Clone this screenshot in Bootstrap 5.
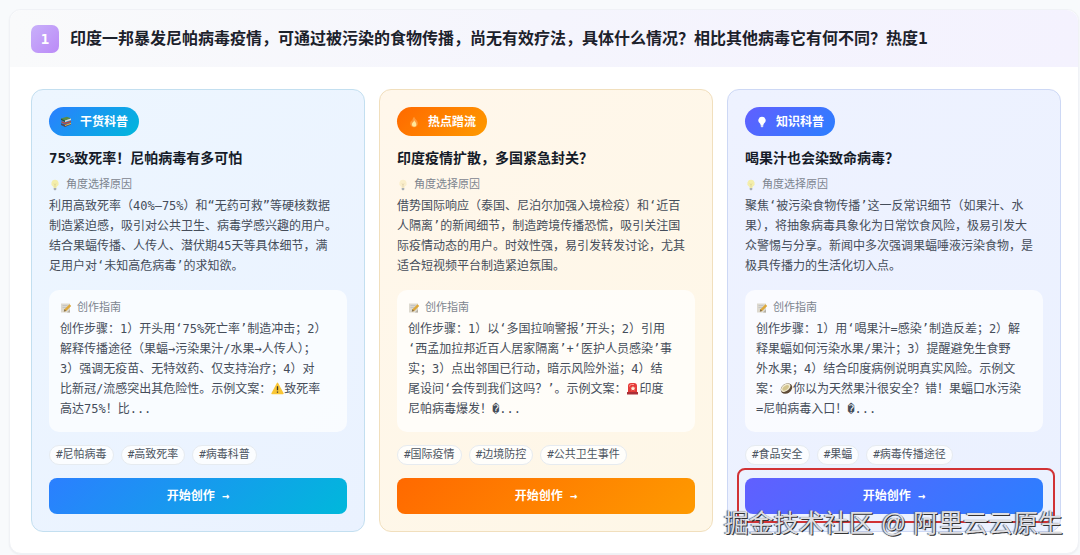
<!DOCTYPE html>
<html lang="zh-CN">
<head>
<meta charset="utf-8">
<meta name="viewport" content="width=device-width, initial-scale=1">
<title>热点选题</title>
<link href="https://cdn.jsdelivr.net/npm/bootstrap@5.3.0/dist/css/bootstrap.min.css" rel="stylesheet">
<style>
body{background:#f8fafc;font-family:"DejaVu Sans Mono","Noto Sans CJK SC",monospace;font-size:12px;line-height:20px;color:#454d5a}
.topic{margin:9px 1px 2px 9px;border:1px solid #f0f2f6;border-radius:12px;background:#fff;box-shadow:0 1px 2px #0f172a0d}
.topic-head{padding:15px 21px 14px;gap:11px;background:linear-gradient(90deg,#f9fafb,#f5f5fd 50%,#f4f2fe);border-radius:12px 12px 0 0}
.rank{width:28px;height:28px;border-radius:7px;background:linear-gradient(135deg,#c8b0fa,#bb8af7);color:#fff;font-size:14px}
.topic-head h1{font-size:16px;line-height:24px;color:#1c212b}
.topic-body{padding:22px 17px 21px 21px}
.angles{--bs-gutter-x:14px;--bs-gutter-y:14px}
.angle{padding:17px;border:1px solid;border-radius:12px}
.blue{background:linear-gradient(135deg,#edf6ff,#eaf2ff);border-color:#c3dff0;--fill:linear-gradient(135deg,#2b7fff,#00b8db)}
.orange{background:linear-gradient(135deg,#fff7eb,#fef7e7);border-color:#f1dfbd;--fill:linear-gradient(135deg,#ff6900,#fe9a00)}
.indigo{background:linear-gradient(135deg,#eef2ff,#ebf1ff);border-color:#cdd8f5;--fill:linear-gradient(135deg,#615fff,#2b7fff)}
.kind{height:29px;padding:0 11px;gap:8px;border-radius:15px;background:var(--fill);color:#fff;font-weight:700}
.angle h2{font-size:14px;line-height:20px;margin:12px 0 9px;color:#151b28}
.hint{font-size:11px;line-height:16px;gap:5px;color:#7d858f;margin-bottom:3px}
.guide{margin-top:14px;padding:10px 11px 13px;border-radius:10px;background:#ffffffb3}
.tags{gap:7px;margin:13px 0}
.tag-pill{font-size:11px;line-height:18px;padding:0 6px;border:1px solid #e6ebf0;border-radius:10px;background:#ffffffcc;color:#4d5561}
.start{height:36px;padding:0;border:0;border-radius:8px;background:var(--fill);color:#fff;font-size:12px;font-weight:700;width:100%}
.start:hover{color:#fff;filter:brightness(.95)}
.emo{width:12px;height:12px;flex:none}
.emo-text{width:13px;height:13px;vertical-align:-2px}
.focus-frame{position:absolute;inset:-10px -12px -9px -8px;border:2px solid #d13235;border-radius:8px;pointer-events:none}
.stamp{position:absolute;right:-3px;bottom:-10px;font:25px/36px "Liberation Sans","Noto Sans CJK SC",sans-serif;color:#dedee2;text-shadow:1px 1px 0 #333,-1px 0 1px #555;white-space:nowrap;pointer-events:none}
</style>
</head>
<body>
<svg class="d-none" aria-hidden="true">
  <symbol id="bulb" viewBox="0 0 12 12"><path d="M6 .8a3.6 3.6 0 0 0-2.2 6.5c.5.5.7 1 .8 1.6h2.8c.1-.6.3-1.1.8-1.6A3.6 3.6 0 0 0 6 .8Z" fill="var(--glass,#f4eeab)"/><path d="M5 4.500 6 6l1-1.500M6 6v2.500" fill="none" stroke="var(--wire,#d6cf92)" stroke-width=".6"/><path d="M4.700 9h2.600v1.400l-.7.900H5.400l-.7-.9Z" fill="var(--cap,#a9b0b5)"/></symbol>
  <symbol id="note" viewBox="0 0 12 12"><path d="M1 1.500h9v9H1Z" fill="#ddd9cf"/><path d="M1 10.500h6l3-3v3Z" fill="#b5b0a5"/><path d="M2.500 3.500h5M2.500 5.500h4" stroke="#b9bcc0" stroke-width=".7"/><path d="m4.500 7.200 5-5 1.700 1.700-5 5-2.400.7Z" fill="#dda83b"/><path d="m3.800 9.600.7-2.400 1.700 1.700Z" fill="#7b6a50"/></symbol>
</svg>

<main class="topic">
  <header class="topic-head d-flex align-items-center">
    <span class="rank d-flex align-items-center justify-content-center flex-shrink-0 fw-bold">1</span>
    <h1 class="mb-0 fw-bold">印度一邦暴发尼帕病毒疫情，可通过被污染的食物传播，尚无有效疗法，具体什么情况？相比其他病毒它有何不同？热度1</h1>
  </header>

  <div class="topic-body">
    <div class="row row-cols-1 row-cols-md-3 angles">
      <div class="col">
        <article class="angle blue h-100 d-flex flex-column">
          <span class="kind d-inline-flex align-items-center align-self-start">
            <svg class="emo" viewBox="0 0 12 12"><path d="m1 2.500 6-1.800 4 1.800-6 2Z" fill="#5b8a45"/><path d="m1 2.500 4 2v1.600l-4-2Z" fill="#34572d"/><path d="m5 4.500 6-2V4L5 6.100Z" fill="#e8ddc8"/><path d="m1.500 5 3.500 1.500L11 4.700v1.500L5 8.300 1.500 6.700Z" fill="#b64a3c"/><path d="m1 7.200 4 1.600 6-2.200v2l-6 2.300-4-1.900Z" fill="#504a58"/><path d="m5 8.900 6-2.200v1.200l-6 2.200Z" fill="#e3b653"/></svg>
            干货科普</span>
          <h2 class="fw-bold">75%致死率！尼帕病毒有多可怕</h2>
          <div class="hint d-flex align-items-center"><svg class="emo"><use href="#bulb"/></svg>角度选择原因</div>
          <p class="mb-0">利用高致死率（40%–75%）和“无药可救”等硬核数据<br>制造紧迫感，吸引对公共卫生、病毒学感兴趣的用户。<br>结合果蝠传播、人传人、潜伏期45天等具体细节，满<br>足用户对‘未知高危病毒’的求知欲。</p>
          <section class="guide">
            <div class="hint d-flex align-items-center"><svg class="emo"><use href="#note"/></svg>创作指南</div>
            <p class="mb-0">创作步骤：1）开头用‘75%死亡率’制造冲击；2）<br>解释传播途径（果蝠→污染果汁/水果→人传人）；<br>3）强调无疫苗、无特效药、仅支持治疗；4）对<br>比新冠/流感突出其危险性。示例文案：<svg class="emo-text" viewBox="0 0 13 13" role="img" aria-label="警告"><path d="M6.500 1.300 12 11.500H1Z" fill="#f9c636" stroke="#f9c636" stroke-width="1.400" stroke-linejoin="round"/><path d="M6.500 4.300v4M6.500 9.400v1.300" stroke="#3b352c" stroke-width="1.300"/></svg>致死率<br>高达75%！比...</p>
          </section>
          <div class="tags d-flex flex-wrap"><span class="tag-pill">#尼帕病毒</span><span class="tag-pill">#高致死率</span><span class="tag-pill">#病毒科普</span></div>
          <button type="button" class="btn start mt-auto">开始创作 →</button>
        </article>
      </div>

      <div class="col">
        <article class="angle orange h-100 d-flex flex-column">
          <span class="kind d-inline-flex align-items-center align-self-start">
            <svg class="emo" viewBox="0 0 12 12"><path d="M6.200.8c.3 2 3.600 3.500 3.600 6.600A3.700 3.700 0 0 1 6 11.300a3.700 3.700 0 0 1-3.800-3.800c0-1.400.7-2.400 1.400-3.200 0 .9.300 1.400.7 1.600C4.200 4 4.800 2.100 6.200.8Z" fill="#ff9a3a"/><path d="M6.300 4.200c.2 1.400 2 2.200 2 4A2.300 2.300 0 0 1 6 10.700a2.300 2.300 0 0 1-2.100-2.500c0-1.600 2-2.200 2.400-4Z" fill="#ffe79a"/></svg>
            热点蹭流</span>
          <h2 class="fw-bold">印度疫情扩散，多国紧急封关？</h2>
          <div class="hint d-flex align-items-center"><svg class="emo" style="--glass:#faeecb;--wire:#d9c8a4"><use href="#bulb"/></svg>角度选择原因</div>
          <p class="mb-0">借势国际响应（泰国、尼泊尔加强入境检疫）和‘近百<br>人隔离’的新闻细节，制造跨境传播恐慌，吸引关注国<br>际疫情动态的用户。时效性强，易引发转发讨论，尤其<br>适合短视频平台制造紧迫氛围。</p>
          <section class="guide">
            <div class="hint d-flex align-items-center"><svg class="emo"><use href="#note"/></svg>创作指南</div>
            <p class="mb-0">创作步骤：1）以‘多国拉响警报’开头；2）引用<br>‘西孟加拉邦近百人居家隔离’+‘医护人员感染’事<br>实；3）点出邻国已行动，暗示风险外溢；4）结<br>尾设问‘会传到我们这吗？’。示例文案：<svg class="emo-text" viewBox="0 0 13 13" role="img" aria-label="警报"><path d="M2 11V4q0-3 3-3h3q3 0 3 3v7Z" fill="#e43a38"/><path d="M3.500 4.500q0-2 2-2H8" stroke="#ff9b90" fill="none"/><path d="m7 4 .8 1.500 1.700.2-1.300 1.200.4 1.700L7 7.800l-1.600.8.400-1.700-1.300-1.200 1.700-.2Z" fill="#fff0da"/><path d="M1 10h11v2.500H1Z" fill="#a92f37"/></svg>印度<br>尼帕病毒爆发！&#xFFFD;...</p>
          </section>
          <div class="tags d-flex flex-wrap"><span class="tag-pill">#国际疫情</span><span class="tag-pill">#边境防控</span><span class="tag-pill">#公共卫生事件</span></div>
          <button type="button" class="btn start mt-auto">开始创作 →</button>
        </article>
      </div>

      <div class="col">
        <article class="angle indigo h-100 d-flex flex-column position-relative">
          <span class="kind d-inline-flex align-items-center align-self-start">
            <svg class="emo" style="--glass:#fff;--cap:#e2e4f2;--wire:#fff"><use href="#bulb"/></svg>
            知识科普</span>
          <h2 class="fw-bold">喝果汁也会染致命病毒？</h2>
          <div class="hint d-flex align-items-center"><svg class="emo"><use href="#bulb"/></svg>角度选择原因</div>
          <p class="mb-0">聚焦‘被污染食物传播’这一反常识细节（如果汁、水<br>果），将抽象病毒具象化为日常饮食风险，极易引发大<br>众警惕与分享。新闻中多次强调果蝠唾液污染食物，是<br>极具传播力的生活化切入点。</p>
          <section class="guide">
            <div class="hint d-flex align-items-center"><svg class="emo"><use href="#note"/></svg>创作指南</div>
            <p class="mb-0">创作步骤：1）用‘喝果汁=感染’制造反差；2）解<br>释果蝠如何污染水果/果汁；3）提醒避免生食野<br>外水果；4）结合印度病例说明真实风险。示例文<br>案：<svg class="emo-text" viewBox="0 0 13 13" role="img" aria-label="椰子"><ellipse cx="6.500" cy="6.500" rx="6.200" ry="4.800" transform="rotate(-38 6.500 6.500)" fill="#5f4c38"/><ellipse cx="5.700" cy="5.700" rx="5.400" ry="3.300" transform="rotate(-38 5.700 5.700)" fill="#f3ecd2"/><ellipse cx="5.700" cy="5.900" rx="3.800" ry="2" transform="rotate(-38 5.700 5.900)" fill="#d3c48f"/></svg>你以为天然果汁很安全？错！果蝠口水污染<br>=尼帕病毒入口！&#xFFFD;...</p>
          </section>
          <div class="tags d-flex flex-wrap"><span class="tag-pill">#食品安全</span><span class="tag-pill">#果蝠</span><span class="tag-pill">#病毒传播途径</span></div>
          <div class="position-relative mt-auto">
            <button type="button" class="btn start d-block">开始创作 →</button>
            <span class="focus-frame"></span>
          </div>
          <span class="stamp">掘金技术社区 @ 阿里云云原生</span>
        </article>
      </div>
    </div>
  </div>
</main>
<script src="https://cdn.jsdelivr.net/npm/bootstrap@5.3.0/dist/js/bootstrap.bundle.min.js"></script>
</body>
</html>
